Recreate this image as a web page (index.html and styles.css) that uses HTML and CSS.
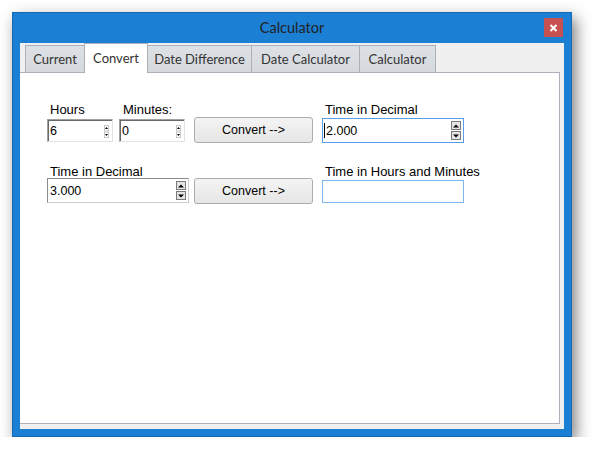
FILE: index.html
```html
<!DOCTYPE html>
<html>
<head>
<meta charset="utf-8">
<link rel="stylesheet" href="styles.css">
</head>
<body>
<div class="window">
  <div class="titlebar">
    <span></span>
    <span class="title">Calculator</span>
    <div class="close">
      <svg width="19" height="19" viewBox="0 0 19 19"><path d="M6.5 7 L12.5 13 M12.5 7 L6.5 13" stroke="#fff" stroke-width="2" fill="none"/></svg>
    </div>
  </div>
  <div class="client">
    <div class="tabs">
      <div class="tab t-current">Current</div>
      <div class="tab tab-active t-convert">Convert</div>
      <div class="tab t-diff">Date Difference</div>
      <div class="tab t-datecalc">Date Calculator</div>
      <div class="tab t-calc">Calculator</div>
    </div>
    <div class="panel">
      <div class="form">
        <div class="pair">
          <div class="field w66">
            <div class="lbl">Hours</div>
            <div class="classic"><span>6</span>
              <svg class="mini" width="5" height="13" viewBox="0 0 5 13"><rect x="0.5" y="0.5" width="4" height="5.5" fill="none" stroke="#c8c8c8"/><rect x="0.5" y="7" width="4" height="5.5" fill="none" stroke="#c8c8c8"/><path d="M1 4 L4 4 L2.5 2 Z" fill="#000"/><path d="M1 9 L4 9 L2.5 11 Z" fill="#000"/></svg>
            </div>
          </div>
          <div class="field w66">
            <div class="lbl lbl-min">Minutes:</div>
            <div class="classic"><span>0</span>
              <svg class="mini" width="5" height="13" viewBox="0 0 5 13"><rect x="0.5" y="0.5" width="4" height="5.5" fill="none" stroke="#c8c8c8"/><rect x="0.5" y="7" width="4" height="5.5" fill="none" stroke="#c8c8c8"/><path d="M1 4 L4 4 L2.5 2 Z" fill="#000"/><path d="M1 9 L4 9 L2.5 11 Z" fill="#000"/></svg>
            </div>
          </div>
        </div>
        <div class="btn btn-r1">Convert --&gt;</div>
        <div class="field">
          <div class="lbl">Time in Decimal</div>
          <div class="spin spin-focus"><span class="val"><i class="caret"></i>2.000</span>
            <div class="sbs">
              <div class="sb"><svg width="6" height="4" viewBox="0 0 6 4"><path d="M0 3.5 L6 3.5 L3 0.5 Z" fill="#000"/></svg></div>
              <div class="sb"><svg width="6" height="4" viewBox="0 0 6 4"><path d="M0 0.5 L6 0.5 L3 3.5 Z" fill="#000"/></svg></div>
            </div>
          </div>
        </div>

        <div class="field">
          <div class="lbl lbl-r2">Time in Decimal</div>
          <div class="spin spin-plain"><span class="val val-plain">3.000</span>
            <div class="sbs">
              <div class="sb"><svg width="6" height="4" viewBox="0 0 6 4"><path d="M0 3.5 L6 3.5 L3 0.5 Z" fill="#000"/></svg></div>
              <div class="sb"><svg width="6" height="4" viewBox="0 0 6 4"><path d="M0 0.5 L6 0.5 L3 3.5 Z" fill="#000"/></svg></div>
            </div>
          </div>
        </div>
        <div class="btn btn-r2">Convert --&gt;</div>
        <div class="field">
          <div class="lbl lbl-r2">Time in Hours and Minutes</div>
          <div class="textbox"></div>
        </div>
      </div>
    </div>
  </div>
</div>
</body>
</html>
```
FILE: styles.css
```css
body {
  margin: 0;
  background: #ffffff;
  font-family: "Liberation Sans", Arial, sans-serif;
}

.window {
  margin: 12px 0 0 12px;
  width: 560px;
  height: 425px;
  box-sizing: border-box;
  background: #1b7fd4;
  border: 1px solid #1768b5;
  padding: 0 7px 7px;
  display: flex;
  flex-direction: column;
  box-shadow: 4px 6px 14px rgba(0, 0, 0, 0.5);
}

.titlebar {
  height: 30px;
  display: grid;
  grid-template-columns: 1fr auto 1fr;
  align-items: start;
}

.title {
  font-family: Lato, "Liberation Sans", sans-serif;
  font-size: 14.5px;
  line-height: 18px;
  margin-top: 6px;
  color: #222222;
}

.close {
  justify-self: end;
  width: 19px;
  height: 19px;
  margin-top: 5px;
  margin-right: 1px;
  background: #c75050;
}

.close svg {
  display: block;
}

.client {
  flex: 1;
  background: #f0f0f0;
  display: flex;
  flex-direction: column;
  padding: 0 4px 5px 0;
}

.tabs {
  height: 29px;
  display: flex;
  align-items: flex-end;
  padding-left: 5px;
  position: relative;
  z-index: 1;
}

.tab {
  height: 27px;
  box-sizing: border-box;
  border: 1px solid #acb0b8;
  border-bottom: none;
  background: linear-gradient(#dde0e4, #d5d8dd);
  margin-left: -1px;
  display: flex;
  align-items: center;
  justify-content: center;
  font-family: Lato, "Liberation Sans", sans-serif;
  font-size: 13px;
  color: #333333;
}

.tab:first-child {
  margin-left: 0;
}

.tab-active {
  height: 30px;
  background: #ffffff;
  margin-bottom: -1px;
  padding-bottom: 2px;
  position: relative;
  z-index: 2;
}

.t-current { width: 60px; }
.t-convert { width: 64px; }
.t-diff { width: 105px; }
.t-datecalc { width: 109px; }
.t-calc { width: 77px; }

.panel {
  flex: 1;
  background: #ffffff;
  border: 1px solid #acb1b9;
  border-left: none;
}

.form {
  display: grid;
  grid-template-columns: 147px 128px 142px;
  row-gap: 23px;
  align-items: start;
  padding: 29px 0 0 27px;
}

.pair {
  display: flex;
  gap: 6px;
}

.field {
  display: flex;
  flex-direction: column;
}

.w66 {
  width: 66px;
}

.lbl {
  font-size: 13px;
  line-height: 16px;
  padding-left: 3px;
  color: #000000;
  white-space: nowrap;
}

.lbl-min {
  padding-left: 4px;
}

.lbl-r2 {
  line-height: 12px;
}

.classic {
  height: 23px;
  margin-top: 1px;
  box-sizing: border-box;
  border-style: solid;
  border-width: 1px;
  border-color: #a0a0a0 #e3e3e3 #e3e3e3 #a0a0a0;
  box-shadow: inset 1px 1px 0 #696969;
  display: flex;
  align-items: center;
  justify-content: space-between;
  padding: 0 3px 0 2px;
  font-size: 12.5px;
  color: #000000;
}

.classic span {
  padding-top: 1px;
}

.mini {
  display: block;
  margin-top: 2px;
}

.btn {
  width: 119px;
  height: 26px;
  box-sizing: border-box;
  border: 1px solid #acacac;
  border-radius: 3px;
  background: linear-gradient(#f4f4f4, #e6e6e6);
  display: flex;
  align-items: center;
  justify-content: center;
  font-size: 12.5px;
  color: #000000;
}

.btn-r1 {
  margin-top: 15px;
}

.btn-r2 {
  margin-top: 12px;
}

.spin {
  box-sizing: border-box;
  display: flex;
  align-items: center;
  justify-content: space-between;
  padding-right: 2px;
  font-size: 12.5px;
  color: #000000;
}

.spin-focus {
  width: 142px;
  height: 25px;
  border: 1px solid #5a9de2;
}

.spin-plain {
  width: 142px;
  height: 25px;
  border-style: solid;
  border-width: 1px;
  border-color: #8a8a8a #cfcfcf #cfcfcf #8a8a8a;
}

.val {
  display: flex;
  align-items: center;
  padding-left: 1px;
}

.val-plain {
  padding-left: 2px;
}

.caret {
  display: block;
  width: 1px;
  height: 15px;
  background: #000000;
  margin-right: 1px;
}

.sbs {
  display: flex;
  flex-direction: column;
  gap: 1px;
}

.sb {
  width: 10px;
  height: 9px;
  box-sizing: border-box;
  border: 1px solid #7a7a7a;
  background: #e4e4e4;
  display: flex;
  align-items: center;
  justify-content: center;
}

.sb svg {
  display: block;
}

.textbox {
  width: 142px;
  height: 23px;
  margin-top: 2px;
  box-sizing: border-box;
  border: 1px solid #7eb4ea;
}
```
